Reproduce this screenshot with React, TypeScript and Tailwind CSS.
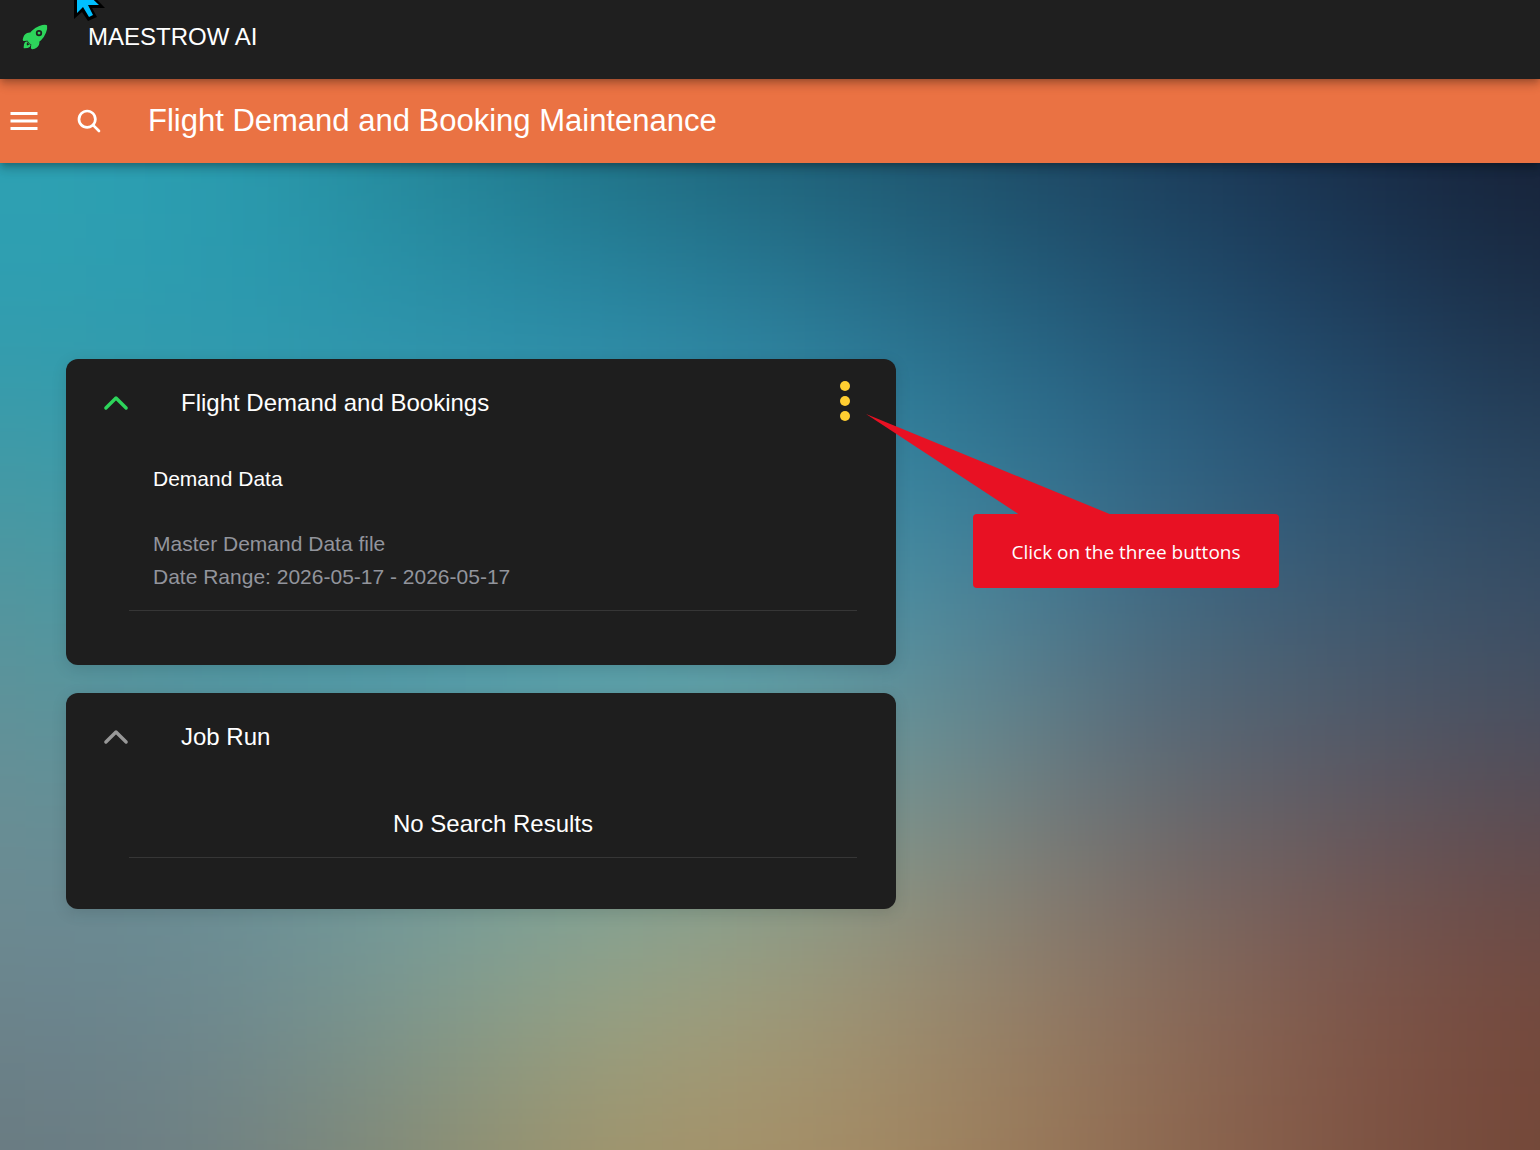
import { IoChevronUp, IoMenuSharp, IoSearch } from "react-icons/io5";

interface PanelProps {
  title: string;
  active?: boolean;
  action?: React.ReactNode;
  className?: string;
  children: React.ReactNode;
}

// Colour field behind the content, one row per band, blended with a blur
const backdrop = [
  ["#2ea2b3", "#2b9fb2", "#258b9c", "#1f7386", "#1e6076", "#1e5069", "#1c3d5b", "#182d49", "#151f34"],
  ["#309eb0", "#2b9bb1", "#2b95ae", "#2a8dab", "#2b83a0", "#266c8a", "#225474", "#1f4264", "#1c3048"],
  ["#4599a3", "#3f99a8", "#3d99ab", "#3f99ad", "#3d8ea8", "#37819c", "#31688a", "#2b5575", "#2c465f"],
  ["#5c949a", "#4c96a3", "#4b9aa9", "#55a0ac", "#589fa9", "#58899a", "#4c697c", "#465c70", "#3f4f64"],
  ["#6a8e94", "#688e95", "#6b989c", "#72a09f", "#7b9f97", "#7d8a84", "#69686d", "#65585f", "#5b4a50"],
  ["#6c858f", "#6b8891", "#789a96", "#93a58a", "#a09e7c", "#98876e", "#8b6e5d", "#80574a", "#74483c"],
  ["#68797f", "#6e7f84", "#828874", "#a0946a", "#a89067", "#9f815c", "#8f694f", "#7f5444", "#724536"],
];

function Backdrop() {
  return (
    <svg
      className="absolute inset-0 h-full w-full"
      viewBox="0 0 8 6"
      preserveAspectRatio="none"
      aria-hidden="true"
    >
      <defs>
        <filter
          id="blend"
          filterUnits="userSpaceOnUse"
          x="-2"
          y="-2"
          width="12"
          height="10"
          colorInterpolationFilters="sRGB"
        >
          <feGaussianBlur stdDeviation="0.55" />
        </filter>
      </defs>
      <g filter="url(#blend)" shapeRendering="crispEdges">
        {backdrop.map((row, y) =>
          row.map((fill, x) => {
            const left = x === 0 ? -2 : x - 0.5;
            const right = x === row.length - 1 ? 10 : x + 0.5;
            const top = y === 0 ? -2 : y - 0.5;
            const bottom = y === backdrop.length - 1 ? 8 : y + 0.5;
            return (
              <rect
                key={`${x}-${y}`}
                x={left}
                y={top}
                width={right - left}
                height={bottom - top}
                fill={fill}
              />
            );
          })
        )}
      </g>
    </svg>
  );
}

function Rocket() {
  return (
    <svg
      className="size-7 text-[#2dd55b]"
      viewBox="0 0 512 512"
      fill="currentColor"
      stroke="currentColor"
      strokeWidth="32"
      strokeLinecap="round"
      strokeLinejoin="round"
      aria-hidden="true"
    >
      <path d="M461.81 53.81a4.4 4.4 0 00-3.3-3.39c-54.38-13.3-180 34.09-248.13 102.17a294.9 294.9 0 00-33.09 39.08c-21-1.9-42-.3-59.88 7.5-50.49 22.2-65.18 80.18-69.28 105.07a9 9 0 009.8 10.4l81.07-8.9a180.29 180.29 0 001.1 18.3 18.15 18.15 0 005.3 11.09l31.39 31.39a18.15 18.15 0 0011.1 5.3 179.91 179.91 0 0018.19 1.1l-8.89 81a9 9 0 0010.39 9.79c24.9-4 83-18.69 105.07-69.17 7.8-17.9 9.4-38.79 7.6-59.69a293.91 293.91 0 0039.19-33.09c68.38-68 115.47-190.86 102.37-247.95z" />
      <circle cx="329" cy="184" r="42" stroke="#1f1f1f" />
      <path d="M109.64 352a45.06 45.06 0 00-26.35 12.84C65.67 382.52 64 448 64 448s65.52-1.67 83.15-19.31A44.73 44.73 0 00160 402.32z" />
      <path d="M132 362c-18 10-22 26-14 38l30-14" stroke="#1f1f1f" strokeWidth="20" fill="none" />
    </svg>
  );
}

function Pointer() {
  return (
    <svg
      className="absolute top-0 left-[74px]"
      width="32"
      height="22"
      viewBox="74 0 32 22"
      aria-hidden="true"
    >
      <path d="M74-24V19l8-7 6 9 9-4-5-9h13z" fill="#000" />
      <path d="M77-16V13l6-6 6 10 4-2-5-10h11z" fill="#00bfff" />
    </svg>
  );
}

function Callout() {
  return (
    <div className="absolute top-[55px] left-full -ml-[30px] text-[#e81123]">
      <svg width="246" height="102" viewBox="0 0 246 102" aria-hidden="true">
        <path d="M0 0L246 101H154z" fill="currentColor" />
      </svg>
      <p className="-mt-0.5 ml-[107px] flex h-[74px] w-[306px] items-center justify-center rounded bg-current pt-0.5">
        <span className="font-['Open_Sans','Noto_Sans',sans-serif] text-[19px] text-white">
          Click on the three buttons
        </span>
      </p>
    </div>
  );
}

function Panel({ title, active, action, className = "", children }: PanelProps) {
  return (
    <section
      className={`relative w-full max-w-[830px] rounded-xl bg-[#1e1e1e] shadow-[0_4px_16px_rgba(0,0,0,0.12)] ${className}`}
    >
      <header className="flex h-[88px] items-center pr-8 pl-8">
        <button type="button" aria-label={`Toggle ${title}`}>
          <IoChevronUp className={`size-9 ${active ? "text-[#2dd55b]" : "text-[#989898]"}`} />
        </button>
        <h2 className="ml-[47px] flex-1 text-[24px]">{title}</h2>
        {action}
      </header>
      {children}
    </section>
  );
}

export default function App() {
  return (
    <div className="flex min-h-screen flex-col overflow-hidden bg-[#1f1f1f] font-['Liberation_Sans',Arial,sans-serif] text-white">
      <header className="relative z-20 flex h-[79px] items-center bg-[#1f1f1f] pb-1.5 pl-[21px] shadow-[0_3px_6px_-2px_rgba(0,0,0,0.2),0_6px_8px_rgba(0,0,0,0.14),0_2px_15px_rgba(0,0,0,0.12)]">
        <Rocket />
        <h1 className="ml-[39px] text-[24px]">MAESTROW AI</h1>
        <Pointer />
      </header>

      <nav className="relative z-10 flex h-[84px] items-center bg-[#ea7243] pl-[6px] shadow-[0_3px_6px_-2px_rgba(0,0,0,0.2),0_6px_8px_rgba(0,0,0,0.14),0_2px_15px_rgba(0,0,0,0.12)]">
        <button type="button" aria-label="Menu">
          <IoMenuSharp className="size-9" />
        </button>
        <button type="button" aria-label="Search" className="ml-[33px]">
          <IoSearch className="size-7" />
        </button>
        <h2 className="ml-[45px] text-[31px]">Flight Demand and Booking Maintenance</h2>
      </nav>

      <main className="relative flex-1">
        <Backdrop />
        <div className="relative flex flex-col gap-7 px-[66px] pt-[196px] pb-16">
          <Panel
            title="Flight Demand and Bookings"
            active
            className="z-10 pb-[54px]"
            action={
              <button type="button" aria-label="More options" className="mr-[14px] pb-1">
                <svg width="10" height="40" viewBox="0 0 10 40" fill="#ffce31">
                  <circle cx="5" cy="5" r="5" />
                  <circle cx="5" cy="20" r="5" />
                  <circle cx="5" cy="35" r="5" />
                </svg>
              </button>
            }
          >
            <div className="mr-[39px] ml-[63px] border-b border-[#363636] px-6 pt-[15px] pb-[17px] text-[21px] leading-[33px]">
              <h3 className="mb-8">Demand Data</h3>
              <p className="text-[#92949c]">Master Demand Data file</p>
              <p className="text-[#92949c]">Date Range: 2026-05-17 - 2026-05-17</p>
            </div>
            <Callout />
          </Panel>

          <Panel title="Job Run" className="pb-[51px]">
            <div className="mr-[39px] ml-[63px] border-b border-[#363636] pt-[25px] pb-[15px] text-center text-[24px] leading-9">
              No Search Results
            </div>
          </Panel>
        </div>
      </main>
    </div>
  );
}
